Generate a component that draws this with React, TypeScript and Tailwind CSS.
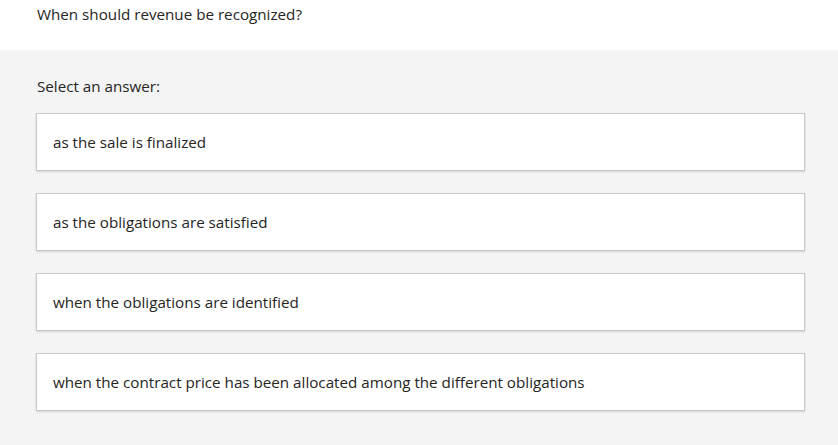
import React from "react";

const answers = [
  "as the sale is finalized",
  "as the obligations are satisfied",
  "when the obligations are identified",
  "when the contract price has been allocated among the different obligations",
];

export default function App() {
  return (
    <div className="w-[838px] h-[445px] bg-[#f4f4f4] text-[#252423] text-[15.2px] [font-family:'Open_Sans',sans-serif]">
      <div className="h-[50px] bg-white pl-[37px] pt-[4px] leading-[21px]">
        When should revenue be recognized?
      </div>
      <div className="pl-[36px] pr-[33px] pt-[26px]">
        <div className="pl-[1px] leading-[21px] mb-[16px]">Select an answer:</div>
        <div className="flex flex-col gap-[22px]">
          {answers.map((a) => (
            <div
              key={a}
              className="h-[58px] flex items-center bg-white border border-[#c8c8c8] shadow-[0_1px_2px_rgba(0,0,0,0.15)] pl-[16px]"
            >
              {a}
            </div>
          ))}
        </div>
      </div>
    </div>
  );
}
